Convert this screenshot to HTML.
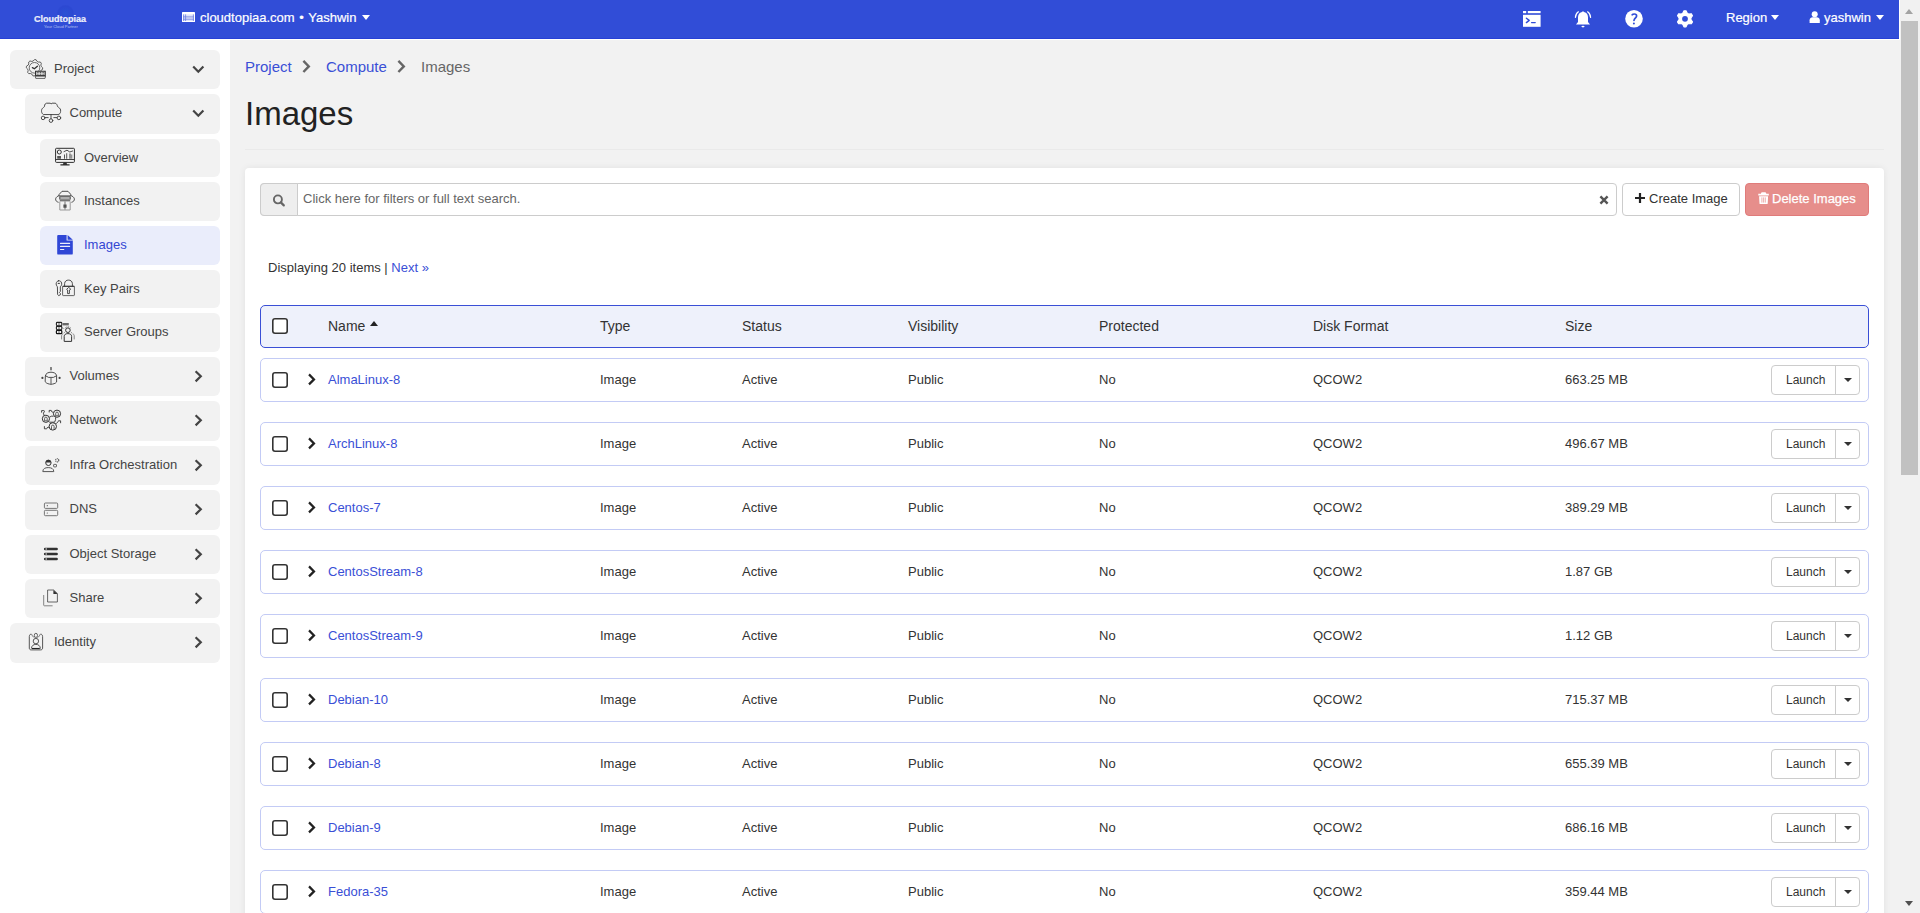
<!DOCTYPE html><html><head><meta charset="utf-8"><style>
*{box-sizing:border-box;margin:0;padding:0}
html,body{width:1920px;height:913px;overflow:hidden;background:#fff;font-family:"Liberation Sans",sans-serif;color:#333}
.a{position:absolute}
#hdr{position:absolute;left:0;top:0;width:1899px;height:39px;background:#314dd7;border-bottom:1px solid #2640d6}
.ht{position:absolute;font-size:13px;line-height:16px;top:10px;white-space:nowrap;color:#fff;-webkit-text-stroke:0.2px #fff}
.caret{position:absolute;width:0;height:0;border-left:4px solid transparent;border-right:4px solid transparent;border-top:5px solid #fff}
#side{position:absolute;left:0;top:39px;width:230px;height:874px;background:#fff}
.nav{position:absolute;left:0;width:0;height:39px;background:#f2f2f2;border-radius:6px;font-size:13px;color:#444}
.nav .lbl{position:absolute;line-height:16px;white-space:nowrap;top:11px}
.nav svg.ic{position:absolute;width:30px;height:30px}
.nav svg.chv{position:absolute}
#main{position:absolute;left:230px;top:40px;width:1670px;height:873px;background:#f2f2f2}
#sb{position:absolute;left:1900px;top:0;width:20px;height:913px;background:#f1f1f1}
.bc{position:absolute;top:58px;font-size:15px;line-height:17px;white-space:nowrap}
#panel{position:absolute;left:245px;top:168px;width:1639px;height:760px;background:#fff;border-radius:4px;box-shadow:0 0 7px rgba(0,0,0,0.07)}
.row{position:absolute;left:260px;width:1609px;height:44px;border:1px solid #c3cbf5;border-radius:5px;background:#fff;font-size:13px;color:#333}
.row .c{position:absolute;top:12.5px;line-height:16px;white-space:nowrap}
.cb{position:absolute;width:16px;height:16px;border-radius:3px;background:#fff;box-shadow:inset 0 0 0 1.6px #333}
.lg{position:absolute;left:1510px;top:6px;width:89px;height:30px;border:1px solid #ccc;border-radius:4px;background:#fff}
.lg .t{position:absolute;left:14px;top:7px;font-size:12px;line-height:14px;color:#333}
.lg .d{position:absolute;left:63px;top:0;width:1px;height:28px;background:#ccc}
.lg .k{position:absolute;left:72px;top:12px;width:0;height:0;border-left:4px solid transparent;border-right:4px solid transparent;border-top:4px solid #333}
.th{position:absolute;top:12px;line-height:17px;font-size:14px;color:#333;white-space:nowrap}
</style></head><body>
<div id="hdr">
<div class="a" style="left:57px;top:5px;width:17px;height:17px;border-radius:50%;background:radial-gradient(circle,#2a52d4 0%,#2c48d2 60%,rgba(49,77,215,0) 100%)"></div>
<div class="ht" style="left:34px;top:14px;font-size:9px;line-height:11px;font-weight:bold;color:#e8ebfa">Cloudtopiaa</div>
<div class="ht" style="left:44px;top:24px;font-size:4px;line-height:5px;color:#b8c2f0;-webkit-text-stroke:0">Your Cloud Partner</div>
<svg class="a" style="left:176px;top:4px" width="30" height="30" viewBox="0 0 30 30">
<rect x="6" y="8" width="13" height="10" rx="0.6" fill="#fff"/>
<rect x="7" y="10.4" width="11" height="6.6" fill="#dfe3fa"/>
<path stroke="#6d7fe2" stroke-width="0.8" d="M7,12.9 H18 M7,15.2 H18 M7.6,10.4 V17 M9.6,10.4 V17 M17.4,10.4 V17"/>
</svg>
<div class="ht" style="left:200px">cloudtopiaa.com <span style="margin:0 1px 0 1px">&bull;</span> Yashwin</div>
<div class="caret" style="left:362px;top:15px"></div>
<svg class="a" style="left:1517px;top:4px" width="30" height="30" viewBox="0 0 30 30">
<rect x="6" y="7" width="3.2" height="2.2" fill="#fff"/><rect x="10.8" y="7" width="12.8" height="2.2" fill="#fff"/>
<rect x="6" y="10.8" width="17.6" height="12" fill="#fff"/>
<path fill="none" stroke="#314dd7" stroke-width="1.4" stroke-linecap="round" stroke-linejoin="round" d="M9.4,14.2 L12.2,16.4 L9.4,18.6"/>
<path stroke="#314dd7" stroke-width="1.4" stroke-linecap="round" d="M14.6,18.6 H18.2"/>
</svg>
<svg class="a" style="left:1568px;top:4px" width="30" height="30" viewBox="0 0 30 30">
<path fill="#fff" d="M14,8 Q15,6.6 16,8 C19,8.8 20,11 20,13.6 V18 L22,20.6 H8 L10,18 V13.6 C10,11 11,8.8 14,8Z"/>
<ellipse cx="15" cy="22.6" rx="1.6" ry="0.8" fill="#fff"/>
<path fill="none" stroke="#fff" stroke-width="1.2" stroke-linecap="round" d="M10.4,7.8 C8.8,8.8 7.6,11 7.4,13.4 M19.6,7.8 C21.2,8.8 22.4,11 22.6,13.4"/>
</svg>
<svg class="a" style="left:1619px;top:4px" width="30" height="30" viewBox="0 0 30 30">
<circle cx="15" cy="14.8" r="8.8" fill="#fff"/>
<path fill="none" stroke="#314dd7" stroke-width="1.7" stroke-linecap="round" d="M13.2,10.8 C13.6,10.2 14.4,10 15.4,10 C16.8,10 17.6,10.8 17.6,12 C17.6,13.6 15.4,14.2 15,16.4"/>
<circle cx="14.9" cy="19.4" r="1" fill="#314dd7"/>
</svg>
<svg class="a" style="left:1670px;top:4px" width="30" height="30" viewBox="0 0 30 30">
<path fill="#fff" stroke="#fff" stroke-width="1.1" stroke-linejoin="round" transform="rotate(-7.5 15 14.8)" d="M15.00,6.70 L17.10,6.98 L18.00,9.60 L19.24,10.56 L22.01,10.75 L22.82,12.70 L21.00,14.80 L20.80,16.35 L22.01,18.85 L20.73,20.53 L18.00,20.00 L16.55,20.60 L15.00,22.90 L12.90,22.62 L12.00,20.00 L10.76,19.04 L7.99,18.85 L7.18,16.90 L9.00,14.80 L9.20,13.25 L7.99,10.75 L9.27,9.07 L12.00,9.60 L13.45,9.00Z"/>
<circle cx="15" cy="14.8" r="2.9" fill="#314dd7"/>
</svg>
<div class="ht" style="left:1726px">Region</div>
<div class="caret" style="left:1771px;top:15px"></div>
<svg class="a" style="left:1800px;top:4px" width="30" height="30" viewBox="0 0 30 30">
<circle cx="14.7" cy="10.3" r="3" fill="#fff"/>
<path fill="#fff" d="M9.6,19 V16.2 C9.6,14.2 11,13.2 12.6,13.2 H16.8 C18.4,13.2 19.8,14.2 19.8,16.2 V19Z"/>
</svg>
<div class="ht" style="left:1824px">yashwin</div>
<div class="caret" style="left:1876px;top:15px"></div>
</div>
<div class="nav" style="left:10px;top:50px;width:210px;height:39px;background:#f2f2f2;color:#444">
<svg class="ic" style="left:12px;top:4px" viewBox="0 0 30 30"><path fill="none" stroke="#444" stroke-width="0.85" stroke-linejoin="round" d="M12.50,5.60 L14.10,5.76 L15.14,7.43 L16.33,8.06 L18.30,8.00 L19.32,9.24 L18.87,11.16 L19.27,12.45 L20.70,13.80 L20.54,15.40 L18.87,16.44 L18.24,17.63 L18.30,19.60 L17.06,20.62 L15.14,20.17 L13.85,20.57 L12.50,22.00 L10.90,21.84 L9.86,20.17 L8.67,19.54 L6.70,19.60 L5.68,18.36 L6.13,16.44 L5.73,15.15 L4.30,13.80 L4.46,12.20 L6.13,11.16 L6.76,9.97 L6.70,8.00 L7.94,6.98 L9.86,7.43 L11.15,7.03Z"/>
<circle cx="12.5" cy="13.8" r="5.3" fill="none" stroke="#555" stroke-width="0.85"/>
<path fill="none" stroke="#333" stroke-width="1.3" stroke-linecap="round" d="M10.4,13.6 L12.4,14.8 L15.4,12.2"/>
<path fill="#f2f2f2" stroke="#2a2a2a" stroke-width="1.1" d="M13.6,17.2 H23.2 V21.6 H13.6Z"/>
<path stroke="#333" stroke-width="0.9" stroke-dasharray="1 0.6" d="M14.8,18.6 H22.2 M14.8,20.2 H22.2"/>
<path fill="none" stroke="#555" stroke-width="0.9" d="M13.2,22 H23.6 L23,24.4 H13.8Z"/></svg>
<div class="lbl" style="left:44px">Project</div>
<svg class="chv" style="left:182px;top:15px" width="13" height="9" viewBox="0 0 13 9"><path fill="none" stroke="#444" stroke-width="2.2" d="M1.2,1.6 L6.3,6.8 L11.4,1.6"/></svg>
</div>
<div class="nav" style="left:25px;top:94px;width:195px;height:40px;background:#f2f2f2;color:#444">
<svg class="ic" style="left:11px;top:4px" viewBox="0 0 30 30"><path fill="none" stroke="#3a3a3a" stroke-width="0.9" stroke-linecap="round" stroke-linejoin="round" d="M7.2,16.4 C5.2,15.6 4.9,11.6 6.6,10.2 C7.4,9.4 8.4,9 8.4,8.6 C8.6,6.2 9.6,5.2 10.6,5.2 H14.2 L15.1,5.9 L16.1,5.2 H19.2 C20.6,5.4 21.3,7.4 21.6,8.6 C22.8,9.6 24.6,10.6 24.6,12 V13.4 C24.6,15.2 23.6,16.2 22.4,16.5 Z"/>
<path fill="none" stroke="#3a3a3a" stroke-width="0.9" stroke-linecap="round" stroke-linejoin="round" d="M15,16.6 V20.6 M9.2,19.6 H12.2 M17.8,19.6 H20.8"/>
<circle cx="7.1" cy="19.9" r="1.8" fill="none" stroke="#3a3a3a" stroke-width="0.9" stroke-linecap="round" stroke-linejoin="round"/><circle cx="22.9" cy="19.9" r="1.8" fill="none" stroke="#3a3a3a" stroke-width="0.9" stroke-linecap="round" stroke-linejoin="round"/><circle cx="15" cy="22.6" r="1.8" fill="none" stroke="#3a3a3a" stroke-width="0.9" stroke-linecap="round" stroke-linejoin="round"/></svg>
<div class="lbl" style="left:44.5px">Compute</div>
<svg class="chv" style="left:167px;top:15px" width="13" height="9" viewBox="0 0 13 9"><path fill="none" stroke="#444" stroke-width="2.2" d="M1.2,1.6 L6.3,6.8 L11.4,1.6"/></svg>
</div>
<div class="nav" style="left:40px;top:139px;width:180px;height:38px;background:#f2f2f2;color:#444">
<svg class="ic" style="left:10px;top:3px" viewBox="0 0 30 30"><rect x="5.6" y="6.3" width="18.8" height="14.1" rx="0.8" fill="none" stroke="#2e2e2e" stroke-width="1"/>
<path stroke="#2e2e2e" stroke-width="0.9" d="M5.6,17.5 H24.4"/>
<path fill="#2e2e2e" d="M13.8,20.4 H16.2 L17.2,22.2 H19.6 V23.4 H10.4 V22.2 H12.8Z"/>
<circle cx="9.3" cy="10" r="2" fill="none" stroke="#333" stroke-width="1"/>
<path fill="#555" d="M7.2,14 H11 V16.8 H7.2Z M14,12.4 H15 V16.8 H14Z M16.2,11.2 H17.2 V16.8 H16.2Z M19.4,11.4 H20.6 V16.8 H19.4Z M21.4,12.4 H22.2 V16.8 H21.4Z"/>
<path fill="none" stroke="#3a3a3a" stroke-width="0.9" stroke-linecap="round" stroke-linejoin="round" d="M14,9.6 L17,8.2 L19.8,10 L22.6,9"/></svg>
<div class="lbl" style="left:44px">Overview</div>
</div>
<div class="nav" style="left:40px;top:182px;width:180px;height:39px;background:#f2f2f2;color:#444">
<svg class="ic" style="left:10px;top:4px" viewBox="0 0 30 30"><path fill="none" stroke="#3a3a3a" stroke-width="0.9" stroke-linecap="round" stroke-linejoin="round" d="M9.3,8.3 L12,5.3 H18 L20.7,8.3 V9.9 H9.3Z"/>
<rect x="9.8" y="10.9" width="10.4" height="2.2" fill="none" stroke="#333" stroke-width="0.9"/>
<path fill="#777" d="M9.8,14 H20.2 V15.4 H9.8Z"/>
<path fill="none" stroke="#999" stroke-width="1" d="M9.8,15.6 V24 H20.2 V15.6"/>
<path fill="#555" d="M13.4,18.6 H16.6 V21.8 H13.4Z M14.6,15.6 H15.4 V23.6 H14.6Z"/>
<path fill="none" stroke="#3a3a3a" stroke-width="0.9" stroke-linecap="round" stroke-linejoin="round" stroke-dasharray="1.2 0.8" d="M8.6,9.8 C5,11.2 4.4,15 8.2,16.2 M21.4,9.8 C25,11.2 25.6,15 21.8,16.2"/></svg>
<div class="lbl" style="left:44px">Instances</div>
</div>
<div class="nav" style="left:40px;top:226px;width:180px;height:39px;background:#eaedfb;color:#3346d3">
<svg class="ic" style="left:10px;top:4px" viewBox="0 0 30 30"><path fill="#2f46d6" d="M8.2,4.9 H16.6 V10.5 H22.8 V23.4 Q22.8,24.6 21.6,24.6 H8.4 Q7.2,24.6 7.2,23.4 V6.1 Q7.2,4.9 8.2,4.9Z M17.6,4.9 L22.8,9.8 H17.6Z"/>
<path stroke="#eceefb" stroke-width="1.1" stroke-linecap="round" d="M10.5,13.4 H19.6 M10.5,16.4 H19.6 M10.5,19.5 H13.8"/></svg>
<div class="lbl" style="left:44px">Images</div>
</div>
<div class="nav" style="left:40px;top:270px;width:180px;height:38px;background:#f2f2f2;color:#444">
<svg class="ic" style="left:10px;top:4px" viewBox="0 0 30 30"><path fill="none" stroke="#3a3a3a" stroke-width="0.9" stroke-linecap="round" stroke-linejoin="round" d="M8.6,6.7 C6.6,6.9 5.6,9.6 6.4,11.2 C6.8,12 7.2,12.4 7.4,12.8 L7.6,20.4 L8.6,21.6 L10.4,20.8 V19.4 L9.4,18.4 L10.4,17.4 L10.3,12.8 C11.3,11.8 12,10.8 11.6,9 C11.2,7.4 10,6.6 8.6,6.7Z"/>
<path stroke="#333" stroke-width="1" d="M7.8,9.4 H9.8"/>
<path fill="none" stroke="#3a3a3a" stroke-width="0.9" stroke-linecap="round" stroke-linejoin="round" d="M14.6,12.2 V9.6 C14.8,7 16.6,6.1 18.5,6.1 C20.4,6.1 22.2,7 22.4,9.6 V12.2"/>
<rect x="12.6" y="12.3" width="11.8" height="9.3" rx="0.6" fill="none" stroke="#555" stroke-width="0.9"/>
<path stroke="#333" stroke-width="1" d="M12.6,12.3 H24.4"/>
<path fill="none" stroke="#3a3a3a" stroke-width="0.9" stroke-linecap="round" stroke-linejoin="round" d="M18.4,13.6 L16.6,15.4 L17.6,16 V19.6 H19.4 V16 L20.4,15.4Z"/></svg>
<div class="lbl" style="left:44px">Key Pairs</div>
</div>
<div class="nav" style="left:40px;top:313px;width:180px;height:39px;background:#f2f2f2;color:#444">
<svg class="ic" style="left:10px;top:4px" viewBox="0 0 30 30"><rect x="6.4" y="5.4" width="5.4" height="3.3" rx="0.9" fill="none" stroke="#222" stroke-width="1.1"/>
<rect x="6.4" y="9.4" width="5.4" height="3.3" rx="0.9" fill="none" stroke="#222" stroke-width="1.1"/>
<rect x="6.4" y="13.4" width="5.4" height="3.3" rx="0.9" fill="none" stroke="#111" stroke-width="1.2"/>
<path stroke="#444" stroke-width="0.8" d="M8,7 H10 M8,11 H10 M8,15 H10"/>
<path fill="#6a6a6a" d="M12.6,6 H18.8 V8.4 H12.6Z"/>
<path fill="#777" d="M12.2,10 L13.8,11.4 L13.2,12 L12.2,11Z"/>
<circle cx="17.9" cy="13.2" r="2.3" fill="#f2f2f2" stroke="#333" stroke-width="1"/>
<path fill="none" stroke="#444" stroke-width="0.8" stroke-dasharray="0.9 0.9" d="M15,11.2 C15.8,9.4 20,9.4 20.8,11.2 M14.6,15.4 L13.8,16 M21.2,15.4 L22,16"/>
<path fill="#f2f2f2" stroke="#333" stroke-width="1" d="M14.2,24.4 V19.4 C14.2,17.6 15.6,16.6 17.9,16.6 C20.2,16.6 21.6,17.6 21.6,19.4 V24.4Z"/>
<path fill="none" stroke="#888" stroke-width="1" d="M11.6,22.4 V18.8 C11.6,17.6 12.2,17 13.2,16.8 M24.2,22.4 V18.8 C24.2,17.6 23.6,17 22.6,16.8"/></svg>
<div class="lbl" style="left:44px">Server Groups</div>
</div>
<div class="nav" style="left:25px;top:357px;width:195px;height:39px;background:#f2f2f2;color:#444">
<svg class="ic" style="left:11px;top:4px" viewBox="0 0 30 30"><path fill="none" stroke="#3a3a3a" stroke-width="0.9" stroke-linecap="round" stroke-linejoin="round" d="M9.4,14.6 C9.6,12.4 12.4,11.2 15,11.2 C17.6,11.2 20.4,12.4 20.6,14.6 V21 C19.4,22.6 17,23.2 15,23.2 C13,23.2 10.6,22.6 9.4,21Z"/>
<path fill="none" stroke="#3a3a3a" stroke-width="0.9" stroke-linecap="round" stroke-linejoin="round" d="M9.6,14.8 L12.6,16.4 H17.4 L20.4,14.8 M15,16.4 V23"/>
<path stroke="#aaa" stroke-width="0.9" d="M15,16.6 V23"/>
<circle cx="6.4" cy="16.9" r="1.1" fill="#444"/><circle cx="23.6" cy="16.9" r="1.1" fill="#444"/>
<path stroke="#444" stroke-width="1.3" stroke-linecap="round" d="M15,6.6 V8.8"/></svg>
<div class="lbl" style="left:44.5px">Volumes</div>
<svg class="chv" style="left:169px;top:13px" width="9" height="13" viewBox="0 0 9 13"><path fill="none" stroke="#444" stroke-width="2.2" d="M1.6,1.2 L6.8,6.3 L1.6,11.4"/></svg>
</div>
<div class="nav" style="left:25px;top:401px;width:195px;height:40px;background:#f2f2f2;color:#444">
<svg class="ic" style="left:11px;top:4px" viewBox="0 0 30 30"><path fill="none" stroke="#333" stroke-width="0.9" d="M13.4,12.4 L15.2,11.2 H17.6 M19.6,12.3 V14.6 L18.6,17.2 H13.6 L12.6,16.6"/>
<circle cx="9.9" cy="13.8" r="3.6" fill="#f2f2f2" stroke="#2a2a2a" stroke-width="0.95"/>
<circle cx="21" cy="8.7" r="3.6" fill="#f2f2f2" stroke="#2a2a2a" stroke-width="0.95"/>
<circle cx="16.8" cy="21.4" r="3.7" fill="#f2f2f2" stroke="#2a2a2a" stroke-width="0.95"/>
<path fill="none" stroke="#444" stroke-width="0.85" d="M8.6,13.4 A1.3,1.3 0 1 1 11.2,13.4 V15.6 M8.6,13.4 V15.6 M7.6,16.2 C8.2,15.6 11.6,15.6 12.2,16.2"/>
<path fill="none" stroke="#444" stroke-width="0.85" d="M19.7,8.4 A1.3,1.3 0 1 1 22.3,8.4 V10.6 M19.7,8.4 V10.6 M18.7,11.1 C19.3,10.6 22.7,10.6 23.3,11.1"/>
<path fill="none" stroke="#444" stroke-width="0.85" d="M15.5,21.4 A1.3,1.3 0 1 1 18.1,21.4 V24.6 M15.5,21.4 V24.6"/>
<path fill="none" stroke="#333" stroke-width="0.9" d="M5.6,7.6 V5.6 H7.8 Q8.6,5.6 8.4,6.6 L7.4,8.2 L8.2,10.6 M13.2,7.4 V5.4 H15.2 Q16,5.6 15.6,6.6 L17.4,7.6 M24.6,18.2 V15.8 H22.6 Q21.8,16 22,16.8 L20,18.8 M8.4,21.2 V23.8 H10.4 Q11.2,23.6 11,22.8 L13.2,22"/></svg>
<div class="lbl" style="left:44.5px">Network</div>
<svg class="chv" style="left:169px;top:13px" width="9" height="13" viewBox="0 0 9 13"><path fill="none" stroke="#444" stroke-width="2.2" d="M1.6,1.2 L6.8,6.3 L1.6,11.4"/></svg>
</div>
<div class="nav" style="left:25px;top:446px;width:195px;height:39px;background:#f2f2f2;color:#444">
<svg class="ic" style="left:11px;top:4px" viewBox="0 0 30 30"><circle cx="12.4" cy="12.8" r="2.7" fill="none" stroke="#333" stroke-width="1"/>
<path fill="#333" d="M9.8,12.4 C9.8,10.4 11,10 12.4,10 C13.8,10 15,10.4 15,12.4Z"/>
<path fill="none" stroke="#555" stroke-width="1" d="M6.8,21.6 C6.8,18.6 9.2,17.6 12.2,17.6 C15.2,17.6 17.8,18.6 17.8,21.6Z"/>
<circle cx="21.2" cy="10.3" r="1.6" fill="none" stroke="#555" stroke-width="1.1" stroke-dasharray="1 0.6"/>
<rect x="17.6" y="14.4" width="2.9" height="2.5" rx="0.5" fill="none" stroke="#555" stroke-width="0.9"/></svg>
<div class="lbl" style="left:44.5px">Infra Orchestration</div>
<svg class="chv" style="left:169px;top:13px" width="9" height="13" viewBox="0 0 9 13"><path fill="none" stroke="#444" stroke-width="2.2" d="M1.6,1.2 L6.8,6.3 L1.6,11.4"/></svg>
</div>
<div class="nav" style="left:25px;top:490px;width:195px;height:40px;background:#f2f2f2;color:#444">
<svg class="ic" style="left:11px;top:4px" viewBox="0 0 30 30"><rect x="8.4" y="9" width="13.3" height="5.4" rx="1" fill="none" stroke="#666" stroke-width="0.9"/>
<rect x="8.4" y="16.3" width="13.3" height="5.4" rx="1" fill="none" stroke="#666" stroke-width="0.9"/>
<circle cx="11.3" cy="11.7" r="0.6" fill="#555"/><circle cx="11.3" cy="19" r="0.6" fill="#555"/></svg>
<div class="lbl" style="left:44.5px">DNS</div>
<svg class="chv" style="left:169px;top:13px" width="9" height="13" viewBox="0 0 9 13"><path fill="none" stroke="#444" stroke-width="2.2" d="M1.6,1.2 L6.8,6.3 L1.6,11.4"/></svg>
</div>
<div class="nav" style="left:25px;top:535px;width:195px;height:39px;background:#f2f2f2;color:#444">
<svg class="ic" style="left:11px;top:4px" viewBox="0 0 30 30"><path stroke="#333" stroke-width="2.6" stroke-linecap="round" d="M9.2,10 H20.6 M9.2,15 H20.6 M9.2,20 H20.6"/>
<path stroke="#aaa" stroke-width="2.2" d="M9.6,10 H10.8 M9.6,15 H10.8 M9.6,20 H10.8"/></svg>
<div class="lbl" style="left:44.5px">Object Storage</div>
<svg class="chv" style="left:169px;top:13px" width="9" height="13" viewBox="0 0 9 13"><path fill="none" stroke="#444" stroke-width="2.2" d="M1.6,1.2 L6.8,6.3 L1.6,11.4"/></svg>
</div>
<div class="nav" style="left:25px;top:579px;width:195px;height:39px;background:#f2f2f2;color:#444">
<svg class="ic" style="left:11px;top:4px" viewBox="0 0 30 30"><path fill="none" stroke="#555" stroke-width="0.9" d="M11.6,7 H17.6 L21.4,10.6 V19 H11.6Z"/>
<path fill="#333" d="M17.4,7 L21.6,11 H17.4Z"/>
<path fill="none" stroke="#777" stroke-width="0.9" d="M7.7,12 V22.2 C7.7,22.6 8,22.8 8.4,22.8 H16.6"/></svg>
<div class="lbl" style="left:44.5px">Share</div>
<svg class="chv" style="left:169px;top:13px" width="9" height="13" viewBox="0 0 9 13"><path fill="none" stroke="#444" stroke-width="2.2" d="M1.6,1.2 L6.8,6.3 L1.6,11.4"/></svg>
</div>
<div class="nav" style="left:10px;top:623px;width:210px;height:40px;background:#f2f2f2;color:#444">
<svg class="ic" style="left:10px;top:4px" viewBox="0 0 30 30"><path fill="none" stroke="#444" stroke-width="0.9" d="M11.4,7.2 H10.9 C9.9,7.2 9.3,8.4 9.3,9.6 V21 C9.3,22.2 10,22.9 11.2,22.9 H20.6 C21.8,22.9 22.6,22.2 22.6,21 V9.6 C22.6,8.4 21.9,7.2 20.9,7.2 H20.4"/>
<path fill="none" stroke="#666" stroke-width="0.9" d="M11.6,7.2 C12.2,8.6 13,10 14.4,10.6 M20.2,7.2 C19.6,8.6 18.8,10 17.4,10.6"/>
<ellipse cx="15.9" cy="8.4" rx="1.6" ry="2.1" fill="none" stroke="#555" stroke-width="0.9"/>
<circle cx="15.9" cy="14.1" r="2.7" fill="none" stroke="#444" stroke-width="0.9"/>
<path fill="none" stroke="#444" stroke-width="0.9" d="M11.4,21.6 C11.6,18.6 13.4,17.4 15.9,17.4 C18.4,17.4 20.2,18.6 20.4,21.6"/>
<path stroke="#222" stroke-width="1.1" d="M12,21.5 H19.8"/></svg>
<div class="lbl" style="left:44px">Identity</div>
<svg class="chv" style="left:184px;top:13px" width="9" height="13" viewBox="0 0 9 13"><path fill="none" stroke="#444" stroke-width="2.2" d="M1.6,1.2 L6.8,6.3 L1.6,11.4"/></svg>
</div>
<div id="main"></div>
<div class="bc" style="left:245px;color:#3a4fd6">Project</div>
<svg class="a" style="left:301px;top:59px" width="12" height="15" viewBox="0 0 12 15"><path fill="none" stroke="#666" stroke-width="2.4" d="M2.4,1.8 L7.8,7.4 L2.4,13"/></svg>
<div class="bc" style="left:326px;color:#3a4fd6">Compute</div>
<svg class="a" style="left:396px;top:59px" width="12" height="15" viewBox="0 0 12 15"><path fill="none" stroke="#666" stroke-width="2.4" d="M2.4,1.8 L7.8,7.4 L2.4,13"/></svg>
<div class="bc" style="left:421px;color:#666">Images</div>
<div class="a" style="left:245px;top:95px;font-size:33px;line-height:38px;color:#222;white-space:nowrap">Images</div>
<div class="a" style="left:245px;top:149px;width:1639px;height:1px;background:#eaeaea"></div>
<div id="panel"></div>
<div class="a" style="left:260px;top:183px;width:1357px;height:33px;border:1px solid #ccc;border-radius:4px;background:#fff"></div>
<div class="a" style="left:260px;top:183px;width:38px;height:33px;border:1px solid #ccc;border-radius:4px 0 0 4px;background:#eee"></div>
<svg class="a" style="left:271px;top:192px" width="16" height="16" viewBox="0 0 16 16"><circle cx="6.9" cy="7.4" r="4" fill="none" stroke="#666" stroke-width="1.9"/><path stroke="#666" stroke-width="2.2" stroke-linecap="round" d="M9.8,10.4 L12.8,13.4"/></svg>
<div class="a" style="left:303px;top:191px;font-size:13px;line-height:16px;color:#666;white-space:nowrap">Click here for filters or full text search.</div>
<svg class="a" style="left:1598px;top:194px" width="12" height="12" viewBox="0 0 12 12"><path stroke="#555" stroke-width="2.4" d="M2.4,2.4 L9.6,9.6 M9.6,2.4 L2.4,9.6"/></svg>
<div class="a" style="left:1622px;top:183px;width:118px;height:33px;border:1px solid #ccc;border-radius:4px;background:#fff"></div>
<svg class="a" style="left:1634px;top:192px" width="12" height="12" viewBox="0 0 12 12"><path stroke="#222" stroke-width="2.2" d="M6,1 V11 M1,6 H11"/></svg>
<div class="a" style="left:1649px;top:191px;font-size:13px;line-height:16px;color:#333;white-space:nowrap">Create Image</div>
<div class="a" style="left:1745px;top:183px;width:124px;height:33px;border-radius:4px;background:#e68e8b;border:1px solid #e07b7a"></div>
<svg class="a" style="left:1757px;top:191px" width="13" height="15" viewBox="0 0 13 15"><path fill="#fff" d="M4.2,1.8 Q4.4,1.2 5,1.2 H8.2 Q8.8,1.2 9,1.8 L9.3,2.8 H11.8 V4.6 H1.3 V2.8 H3.9Z M2.1,5.2 H11.1 L10.7,12.4 Q10.6,12.9 10.1,12.9 H3.1 Q2.6,12.9 2.5,12.4Z"/><path stroke="#e68e8b" stroke-width="0.7" d="M4.9,6.4 V11.6 M6.6,6.4 V11.6 M8.3,6.4 V11.6"/></svg>
<div class="a" style="left:1772px;top:191px;font-size:13px;line-height:16px;color:#fff;white-space:nowrap;-webkit-text-stroke:0.25px #fff">Delete Images</div>
<div class="a" style="left:268px;top:260px;font-size:13px;line-height:16px;color:#333;white-space:nowrap">Displaying 20 items | <span style="color:#3a4fd6">Next &raquo;</span></div>
<div class="a" style="left:260px;top:305px;width:1609px;height:43px;border:1px solid #3a4fd6;border-radius:5px;background:#eef1fb">
<div class="cb" style="left:11px;top:12px;background:#fff"></div>
<div class="th" style="left:67px">Name</div>
<div class="a" style="left:109px;top:15px;width:0;height:0;border-left:4px solid transparent;border-right:4px solid transparent;border-bottom:5px solid #222"></div>
<div class="th" style="left:339px">Type</div>
<div class="th" style="left:481px">Status</div>
<div class="th" style="left:647px">Visibility</div>
<div class="th" style="left:838px">Protected</div>
<div class="th" style="left:1052px">Disk Format</div>
<div class="th" style="left:1304px">Size</div>
</div>
<div class="row" style="top:358px">
<div class="cb" style="left:11px;top:12.5px"></div>
<svg class="a" style="left:45.5px;top:13.5px" width="10" height="13" viewBox="0 0 10 13"><path fill="none" stroke="#222" stroke-width="2.2" d="M2,1.4 L7,6.4 L2,11.4"/></svg>
<div class="c" style="left:67px;color:#3a4fd6">AlmaLinux-8</div>
<div class="c" style="left:339px">Image</div>
<div class="c" style="left:481px">Active</div>
<div class="c" style="left:647px">Public</div>
<div class="c" style="left:838px">No</div>
<div class="c" style="left:1052px">QCOW2</div>
<div class="c" style="left:1304px">663.25 MB</div>
<div class="lg"><div class="t">Launch</div><div class="d"></div><div class="k"></div></div>
</div>
<div class="row" style="top:422px">
<div class="cb" style="left:11px;top:12.5px"></div>
<svg class="a" style="left:45.5px;top:13.5px" width="10" height="13" viewBox="0 0 10 13"><path fill="none" stroke="#222" stroke-width="2.2" d="M2,1.4 L7,6.4 L2,11.4"/></svg>
<div class="c" style="left:67px;color:#3a4fd6">ArchLinux-8</div>
<div class="c" style="left:339px">Image</div>
<div class="c" style="left:481px">Active</div>
<div class="c" style="left:647px">Public</div>
<div class="c" style="left:838px">No</div>
<div class="c" style="left:1052px">QCOW2</div>
<div class="c" style="left:1304px">496.67 MB</div>
<div class="lg"><div class="t">Launch</div><div class="d"></div><div class="k"></div></div>
</div>
<div class="row" style="top:486px">
<div class="cb" style="left:11px;top:12.5px"></div>
<svg class="a" style="left:45.5px;top:13.5px" width="10" height="13" viewBox="0 0 10 13"><path fill="none" stroke="#222" stroke-width="2.2" d="M2,1.4 L7,6.4 L2,11.4"/></svg>
<div class="c" style="left:67px;color:#3a4fd6">Centos-7</div>
<div class="c" style="left:339px">Image</div>
<div class="c" style="left:481px">Active</div>
<div class="c" style="left:647px">Public</div>
<div class="c" style="left:838px">No</div>
<div class="c" style="left:1052px">QCOW2</div>
<div class="c" style="left:1304px">389.29 MB</div>
<div class="lg"><div class="t">Launch</div><div class="d"></div><div class="k"></div></div>
</div>
<div class="row" style="top:550px">
<div class="cb" style="left:11px;top:12.5px"></div>
<svg class="a" style="left:45.5px;top:13.5px" width="10" height="13" viewBox="0 0 10 13"><path fill="none" stroke="#222" stroke-width="2.2" d="M2,1.4 L7,6.4 L2,11.4"/></svg>
<div class="c" style="left:67px;color:#3a4fd6">CentosStream-8</div>
<div class="c" style="left:339px">Image</div>
<div class="c" style="left:481px">Active</div>
<div class="c" style="left:647px">Public</div>
<div class="c" style="left:838px">No</div>
<div class="c" style="left:1052px">QCOW2</div>
<div class="c" style="left:1304px">1.87 GB</div>
<div class="lg"><div class="t">Launch</div><div class="d"></div><div class="k"></div></div>
</div>
<div class="row" style="top:614px">
<div class="cb" style="left:11px;top:12.5px"></div>
<svg class="a" style="left:45.5px;top:13.5px" width="10" height="13" viewBox="0 0 10 13"><path fill="none" stroke="#222" stroke-width="2.2" d="M2,1.4 L7,6.4 L2,11.4"/></svg>
<div class="c" style="left:67px;color:#3a4fd6">CentosStream-9</div>
<div class="c" style="left:339px">Image</div>
<div class="c" style="left:481px">Active</div>
<div class="c" style="left:647px">Public</div>
<div class="c" style="left:838px">No</div>
<div class="c" style="left:1052px">QCOW2</div>
<div class="c" style="left:1304px">1.12 GB</div>
<div class="lg"><div class="t">Launch</div><div class="d"></div><div class="k"></div></div>
</div>
<div class="row" style="top:678px">
<div class="cb" style="left:11px;top:12.5px"></div>
<svg class="a" style="left:45.5px;top:13.5px" width="10" height="13" viewBox="0 0 10 13"><path fill="none" stroke="#222" stroke-width="2.2" d="M2,1.4 L7,6.4 L2,11.4"/></svg>
<div class="c" style="left:67px;color:#3a4fd6">Debian-10</div>
<div class="c" style="left:339px">Image</div>
<div class="c" style="left:481px">Active</div>
<div class="c" style="left:647px">Public</div>
<div class="c" style="left:838px">No</div>
<div class="c" style="left:1052px">QCOW2</div>
<div class="c" style="left:1304px">715.37 MB</div>
<div class="lg"><div class="t">Launch</div><div class="d"></div><div class="k"></div></div>
</div>
<div class="row" style="top:742px">
<div class="cb" style="left:11px;top:12.5px"></div>
<svg class="a" style="left:45.5px;top:13.5px" width="10" height="13" viewBox="0 0 10 13"><path fill="none" stroke="#222" stroke-width="2.2" d="M2,1.4 L7,6.4 L2,11.4"/></svg>
<div class="c" style="left:67px;color:#3a4fd6">Debian-8</div>
<div class="c" style="left:339px">Image</div>
<div class="c" style="left:481px">Active</div>
<div class="c" style="left:647px">Public</div>
<div class="c" style="left:838px">No</div>
<div class="c" style="left:1052px">QCOW2</div>
<div class="c" style="left:1304px">655.39 MB</div>
<div class="lg"><div class="t">Launch</div><div class="d"></div><div class="k"></div></div>
</div>
<div class="row" style="top:806px">
<div class="cb" style="left:11px;top:12.5px"></div>
<svg class="a" style="left:45.5px;top:13.5px" width="10" height="13" viewBox="0 0 10 13"><path fill="none" stroke="#222" stroke-width="2.2" d="M2,1.4 L7,6.4 L2,11.4"/></svg>
<div class="c" style="left:67px;color:#3a4fd6">Debian-9</div>
<div class="c" style="left:339px">Image</div>
<div class="c" style="left:481px">Active</div>
<div class="c" style="left:647px">Public</div>
<div class="c" style="left:838px">No</div>
<div class="c" style="left:1052px">QCOW2</div>
<div class="c" style="left:1304px">686.16 MB</div>
<div class="lg"><div class="t">Launch</div><div class="d"></div><div class="k"></div></div>
</div>
<div class="row" style="top:870px">
<div class="cb" style="left:11px;top:12.5px"></div>
<svg class="a" style="left:45.5px;top:13.5px" width="10" height="13" viewBox="0 0 10 13"><path fill="none" stroke="#222" stroke-width="2.2" d="M2,1.4 L7,6.4 L2,11.4"/></svg>
<div class="c" style="left:67px;color:#3a4fd6">Fedora-35</div>
<div class="c" style="left:339px">Image</div>
<div class="c" style="left:481px">Active</div>
<div class="c" style="left:647px">Public</div>
<div class="c" style="left:838px">No</div>
<div class="c" style="left:1052px">QCOW2</div>
<div class="c" style="left:1304px">359.44 MB</div>
<div class="lg"><div class="t">Launch</div><div class="d"></div><div class="k"></div></div>
</div>
<div id="sb"></div>
<div class="a" style="left:1901px;top:21px;width:17px;height:454px;background:#c1c1c1"></div>
<div class="a" style="left:1905px;top:9px;width:0;height:0;border-left:4.5px solid transparent;border-right:4.5px solid transparent;border-bottom:5px solid #a3a3a3"></div>
<div class="a" style="left:1905px;top:901px;width:0;height:0;border-left:4.5px solid transparent;border-right:4.5px solid transparent;border-top:5px solid #505050"></div>
</body></html>
